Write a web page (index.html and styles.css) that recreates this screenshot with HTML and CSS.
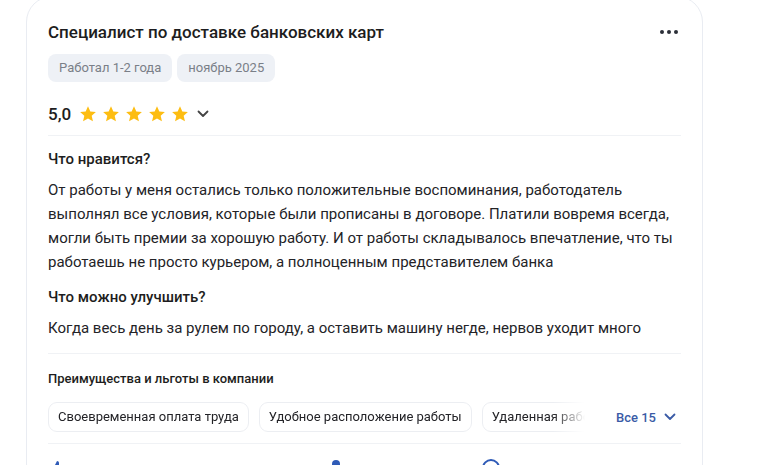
FILE: index.html
```html
<!DOCTYPE html>
<html lang="ru">
<head>
<meta charset="utf-8">
<link rel="stylesheet" href="styles.css">
</head>
<body>
<div class="card">
  <div class="head">
    <div class="title">Специалист по доставке банковских карт</div>
    <button class="more" aria-label="Ещё">
      <svg width="18" height="4" viewBox="0 0 18 4"><circle cx="2" cy="2" r="2"/><circle cx="9" cy="2" r="2"/><circle cx="16" cy="2" r="2"/></svg>
    </button>
  </div>
  <div class="tags">
    <span class="tag">Работал 1-2 года</span>
    <span class="tag">ноябрь 2025</span>
  </div>
  <div class="rating">
    <span class="score">5,0</span>
    <span class="stars">
      <svg viewBox="0 0 24 24"><path d="M12 1.8l3.1 6.9 7.4.7-5.6 5 1.7 7.4L12 18l-6.6 3.8 1.7-7.4-5.6-5 7.4-.7z"/></svg>
      <svg viewBox="0 0 24 24"><path d="M12 1.8l3.1 6.9 7.4.7-5.6 5 1.7 7.4L12 18l-6.6 3.8 1.7-7.4-5.6-5 7.4-.7z"/></svg>
      <svg viewBox="0 0 24 24"><path d="M12 1.8l3.1 6.9 7.4.7-5.6 5 1.7 7.4L12 18l-6.6 3.8 1.7-7.4-5.6-5 7.4-.7z"/></svg>
      <svg viewBox="0 0 24 24"><path d="M12 1.8l3.1 6.9 7.4.7-5.6 5 1.7 7.4L12 18l-6.6 3.8 1.7-7.4-5.6-5 7.4-.7z"/></svg>
      <svg viewBox="0 0 24 24"><path d="M12 1.8l3.1 6.9 7.4.7-5.6 5 1.7 7.4L12 18l-6.6 3.8 1.7-7.4-5.6-5 7.4-.7z"/></svg>
    </span>
    <svg class="chev" width="12" height="8" viewBox="0 0 12 8"><path d="M1.5 1.5L6 6l4.5-4.5" fill="none" stroke="#444" stroke-width="1.8" stroke-linecap="round" stroke-linejoin="round"/></svg>
  </div>
  <div class="divider"></div>
  <div class="section">
    <div class="h">Что нравится?</div>
    <p class="text">От работы у меня остались только положительные воспоминания, работодатель выполнял все условия, которые были прописаны в договоре. Платили вовремя всегда, могли быть премии за хорошую работу. И от работы складывалось впечатление, что ты работаешь не просто курьером, а полноценным представителем банка</p>
  </div>
  <div class="section">
    <div class="h">Что можно улучшить?</div>
    <p class="text">Когда весь день за рулем по городу, а оставить машину негде, нервов уходит много</p>
  </div>
  <div class="divider d2"></div>
  <div class="benefits-title">Преимущества и льготы в компании</div>
  <div class="benefits">
    <div class="chips">
      <span class="chip">Своевременная оплата труда</span>
      <span class="chip">Удобное расположение работы</span>
      <span class="chip">Удаленная работа</span>
    </div>
    <button class="all">Все 15
      <svg width="12" height="8" viewBox="0 0 12 8"><path d="M1.5 1.5L6 6l4.5-4.5" fill="none" stroke="currentColor" stroke-width="1.8" stroke-linecap="round" stroke-linejoin="round"/></svg>
    </button>
  </div>
  <div class="divider d3"></div>
  <div class="actions">
    <span class="act a1"><svg width="18" height="18" viewBox="0 0 18 18"><path d="M6 8l3-6c1.2 0 2 .8 2 2v3h4.5c.8 0 1.4.7 1.3 1.5l-1 6c-.1.6-.7 1.1-1.3 1.1H6z" fill="#2f5bb7"/><rect x="1" y="8" width="3.5" height="8" rx="1" fill="#2f5bb7"/></svg></span>
    <span class="act a2"><svg width="18" height="18" viewBox="0 0 18 18"><circle cx="9" cy="5" r="4" fill="#2f5bb7"/><path d="M2 17c0-4 3-6.5 7-6.5s7 2.5 7 6.5z" fill="#2f5bb7"/></svg></span>
    <span class="act a3"><svg width="18" height="18" viewBox="0 0 18 18"><circle cx="9" cy="9" r="8" fill="none" stroke="#2f5bb7" stroke-width="2"/></svg></span>
  </div>
</div>
</body>
</html>
```
FILE: styles.css
```css
* { box-sizing: border-box; }
html, body { margin: 0; padding: 0; background: #fff; }
body {
  font-family: Roboto, "Noto Sans", Arial, sans-serif;
  color: #1f1f22;
  overflow: hidden;
  height: 465px;
}
.card {
  margin: -4px 0 0 26px;
  width: 677px;
  border: 1px solid #e9ecf2;
  border-radius: 26px;
  padding: 23px 21px 0 21px;
}
.head {
  display: flex;
  align-items: center;
  justify-content: space-between;
  height: 24px;
}
.title {
  font-size: 17px;
  font-weight: 500;
  line-height: 24px;
  color: #1d1d20;
}
.more {
  border: 0;
  background: none;
  padding: 0;
  margin-right: 3px;
  display: flex;
  fill: #2b2f38;
}
.tags {
  display: flex;
  gap: 5px;
  margin-top: 10px;
}
.tag {
  background: #eef1f6;
  color: #7a7f88;
  font-size: 13px;
  line-height: 28px;
  height: 28px;
  padding: 0 11px;
  border-radius: 8px;
}
.rating {
  display: flex;
  align-items: center;
  margin-top: 16px;
  height: 32px;
}
.score {
  font-size: 17px;
  font-weight: 500;
  color: #1d1d20;
  margin-right: 8px;
}
.stars {
  display: flex;
  gap: 5px;
}
.stars svg {
  width: 18px;
  height: 18px;
  fill: #fdbd12;
}
.chev { margin-left: 8px; }
.divider {
  height: 1px;
  background: #f0f2f5;
  margin-top: 5px;
}
.section { margin-top: 13px; }
.h {
  font-size: 15px;
  font-weight: 500;
  line-height: 20px;
  color: #1d1d20;
}
.text {
  margin: 9px 0 0;
  font-size: 15px;
  line-height: 24px;
  color: #232327;
}
.d2 { margin-top: 13px; }
.benefits-title {
  margin-top: 15px;
  font-size: 13px;
  font-weight: 500;
  line-height: 20px;
  color: #1d1d20;
}
.benefits {
  display: flex;
  align-items: center;
  margin-top: 13px;
}
.chips {
  display: flex;
  gap: 10px;
  width: 537px;
  overflow: hidden;
  -webkit-mask-image: linear-gradient(to right, #000 505px, transparent 537px);
  mask-image: linear-gradient(to right, #000 505px, transparent 537px);
}
.chip {
  flex: none;
  border: 1px solid #eceef2;
  border-radius: 9px;
  height: 30px;
  line-height: 28px;
  padding: 0 9px;
  font-size: 13px;
  color: #232327;
  white-space: nowrap;
}
.all {
  margin-left: 31px;
  border: 0;
  background: none;
  padding: 0;
  font-family: inherit;
  font-size: 13px;
  font-weight: 500;
  color: #3a5ba6;
  display: flex;
  align-items: center;
  gap: 8px;
}
.d3 { margin-top: 11px; }
.actions {
  display: flex;
  margin-top: 15px;
  height: 30px;
}
.act { display: flex; }
.a1 { margin-left: 0; }
.a2 { margin-left: 261px; }
.a3 { margin-left: 137px; }
```
